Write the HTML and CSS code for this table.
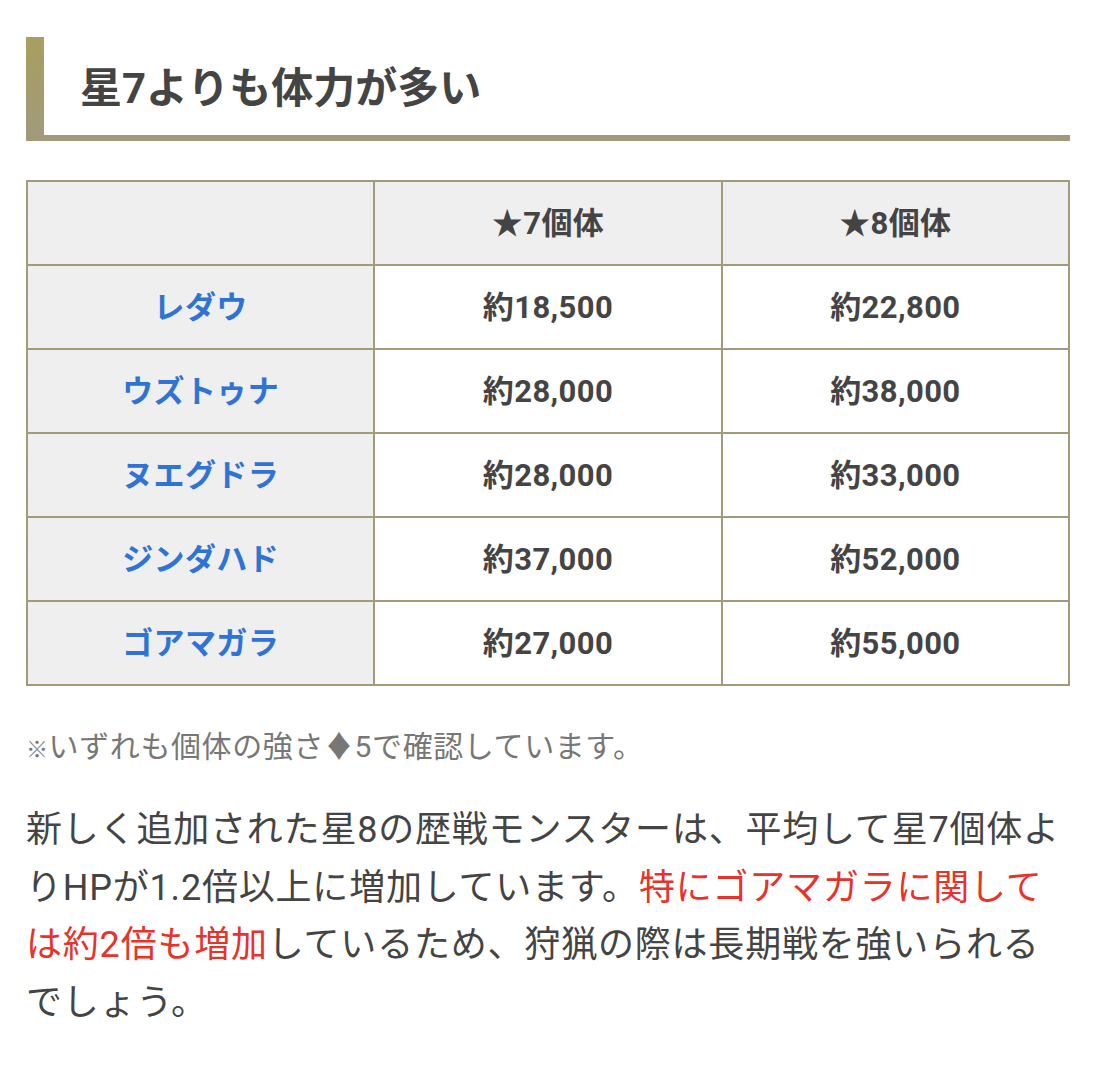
FILE: index.html
```html
<!DOCTYPE html>
<html lang="ja">
<head>
<meta charset="utf-8">
<link rel="stylesheet" href="styles.css">
</head>
<body>
<div class="wrap">
  <h2 class="heading">星7よりも体力が多い</h2>
  <table class="hp-table">
    <tr class="head-row">
      <th></th>
      <th>★7個体</th>
      <th>★8個体</th>
    </tr>
    <tr><th class="name">レダウ</th><td>約18,500</td><td>約22,800</td></tr>
    <tr><th class="name">ウズトゥナ</th><td>約28,000</td><td>約38,000</td></tr>
    <tr><th class="name">ヌエグドラ</th><td>約28,000</td><td>約33,000</td></tr>
    <tr><th class="name">ジンダハド</th><td>約37,000</td><td>約52,000</td></tr>
    <tr><th class="name">ゴアマガラ</th><td>約27,000</td><td>約55,000</td></tr>
  </table>
  <p class="note"><span class="kome">※</span>いずれも個体の強さ♦5で確認しています。</p>
  <p class="body-text">新しく追加された星8の歴戦モンスターは、平均して星7個体よりHPが1.2倍以上に増加しています。<span class="red">特にゴアマガラに関しては約2倍も増加</span>しているため、狩猟の際は長期戦を強いられるでしょう。</p>
</div>
</body>
</html>
```

FILE: styles.css
```css
html, body {
  margin: 0;
  padding: 0;
  background: #ffffff;
}
body {
  font-family: Roboto, "Noto Sans CJK JP", sans-serif;
  color: #444444;
}
.wrap {
  padding: 37px 26px 0 26px;
}
.heading {
  margin: 0;
  height: 94px;
  padding: 0 0 4px 36px;
  display: flex;
  align-items: center;
  font-size: 42px;
  font-weight: 700;
  color: #444444;
  border-left: 18px solid #a89e60;
  border-bottom: 6px solid #a09a7a;
  border-top: 0;
  border-right: 0;
  border-image: linear-gradient(to bottom, #a99f5e, #a09a7b) 1;
}
.hp-table {
  margin-top: 39px;
  width: 1044px;
  border-collapse: collapse;
  table-layout: fixed;
}
.hp-table th,
.hp-table td {
  border: 2px solid #a29b7a;
  height: 76px;
  padding: 0 0 6px 0;
  text-align: center;
  vertical-align: middle;
  font-size: 31px;
  letter-spacing: 0.4px;
  font-weight: 700;
  color: #444444;
  background: #ffffff;
}
.hp-table .head-row th {
  background: #efefef;
}
.hp-table th.name {
  background: #efefef;
  color: #2f74d4;
}
.note {
  margin: 37px 0 0 0;
  font-size: 30px;
  line-height: 48px;
  letter-spacing: 0.6px;
  color: #777777;
}
.kome {
  font-size: 22px;
}
.body-text {
  margin: 28px 0 0 0;
  font-size: 36px;
  line-height: 57.6px;
  letter-spacing: 0.8px;
  color: #444444;
}
.red {
  color: #e8322a;
}
```
